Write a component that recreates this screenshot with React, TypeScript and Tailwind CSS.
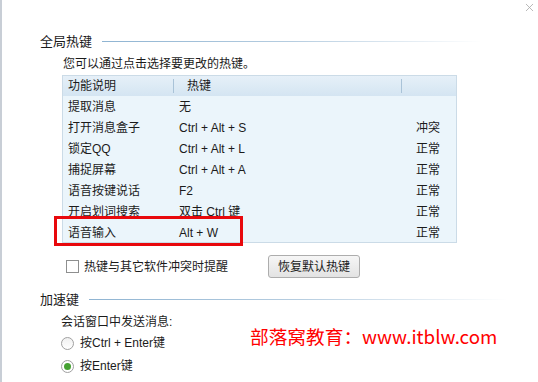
import { X } from 'lucide-react';

const rows = [
  { name: '提取消息', key: '无', status: '' },
  { name: '打开消息盒子', key: 'Ctrl + Alt + S', status: '冲突' },
  { name: '锁定QQ', key: 'Ctrl + Alt + L', status: '正常' },
  { name: '捕捉屏幕', key: 'Ctrl + Alt + A', status: '正常' },
  { name: '语音按键说话', key: 'F2', status: '正常' },
  { name: '开启划词搜索', key: '双击 Ctrl 键', status: '正常' },
  { name: '语音输入', key: 'Alt + W', status: '正常' },
];

const font = "font-['Liberation_Sans','Noto_Sans_CJK_SC',sans-serif]";

export default function App() {
  return (
    <div className={`relative w-[538px] h-[382px] overflow-hidden bg-white text-[12px] leading-[14px] text-[#1b1b1b] ${font}`}>
      <div className="flex h-full">
        {/* window edge */}
        <div className="w-[2px] h-full bg-[#c8ced6]" />

        <div className="flex-1 flex flex-col">
          {/* close */}
          <div className="flex justify-end pr-[2px] pt-[1px] h-[16px]">
            <X className="w-[13px] h-[13px] text-[#a9a9a9]" strokeWidth={1.5} />
          </div>

          {/* 全局热键 */}
          <div className="mt-[17px] flex items-center pl-[38px] pr-[56px] h-[16px]">
            <span className="text-[13px] leading-none">全局热键</span>
            <div className="flex-1 ml-[10px] h-px bg-gradient-to-r from-[#8fb4d2] via-[#b6cde0] to-transparent" />
          </div>

          <div className="mt-[8px] h-[14px] pl-[61px]">您可以通过点击选择要更改的热键。</div>

          {/* table */}
          <div className="mt-[4px] ml-[60px] w-[395px] h-[168px] border border-[#cbdbe7] bg-[#ebf5fb]">
            <div className="flex h-[20px] items-center bg-gradient-to-b from-[#e6f0f8] to-[#d4e5f2]">
              <div className="w-[110px] pl-[5px]">功能说明</div>
              <div className="w-px h-[14px] bg-[#a9c3d8]" />
              <div className="w-[227px] pl-[13px]">热键</div>
              <div className="w-px h-[14px] bg-[#a9c3d8]" />
              <div className="flex-1" />
            </div>
            {rows.map((r) => (
              <div key={r.name} className="flex h-[21px] items-center">
                <div className="w-[111px] pl-[5px] whitespace-nowrap">{r.name}</div>
                <div className="w-[228px] pl-[5px] whitespace-nowrap">{r.key}</div>
                <div className="flex-1 pl-[14px]">{r.status}</div>
              </div>
            ))}
          </div>

          {/* checkbox + button */}
          <div className="mt-[12px] h-[23px] flex items-center pl-[64px]">
            <div className="w-[13px] h-[13px] border border-[#8e8f8f] bg-white" />
            <span className="ml-[5px]">热键与其它软件冲突时提醒</span>
            <div className="ml-[40px] w-[92px] h-[23px] flex items-center justify-center border border-[#adadad] rounded-[3px] bg-gradient-to-b from-[#f6f6f6] to-[#e3e3e3]">
              恢复默认热键
            </div>
          </div>

          {/* 加速键 */}
          <div className="mt-[13px] flex items-center pl-[38px] pr-[30px] h-[16px]">
            <span className="text-[13px] leading-none">加速键</span>
            <div className="flex-1 ml-[10px] h-px bg-gradient-to-r from-[#8fb4d2] via-[#b6cde0] to-transparent" />
          </div>

          <div className="mt-[8px] h-[14px] pl-[59px]">会话窗口中发送消息:</div>

          <div className="mt-[7px] h-[14px] flex items-center pl-[59px]">
            <div className="w-[13px] h-[13px] rounded-full border border-[#a0a0a0] bg-gradient-to-b from-[#f0f0f0] to-white" />
            <span className="ml-[6px]">按Ctrl + Enter键</span>
          </div>
          <div className="mt-[9px] h-[14px] flex items-center pl-[59px]">
            <div className="w-[13px] h-[13px] rounded-full border border-[#a0a0a0] bg-white flex items-center justify-center">
              <div className="w-[7px] h-[7px] rounded-full bg-[#45a132]" />
            </div>
            <span className="ml-[6px]">按Enter键</span>
          </div>
        </div>
      </div>

      {/* red annotation box */}
      <div className="absolute left-[54px] top-[216px] w-[189px] h-[30px] border-[3px] border-[#e8080c]" />

      {/* watermark */}
      <div className="absolute left-[250px] top-[324px] text-[18.7px] leading-[24px] text-[#ff0000] font-['Noto_Sans_CJK_SC',sans-serif] whitespace-nowrap">
        部落窝教育：www.itblw.com
      </div>
    </div>
  );
}
